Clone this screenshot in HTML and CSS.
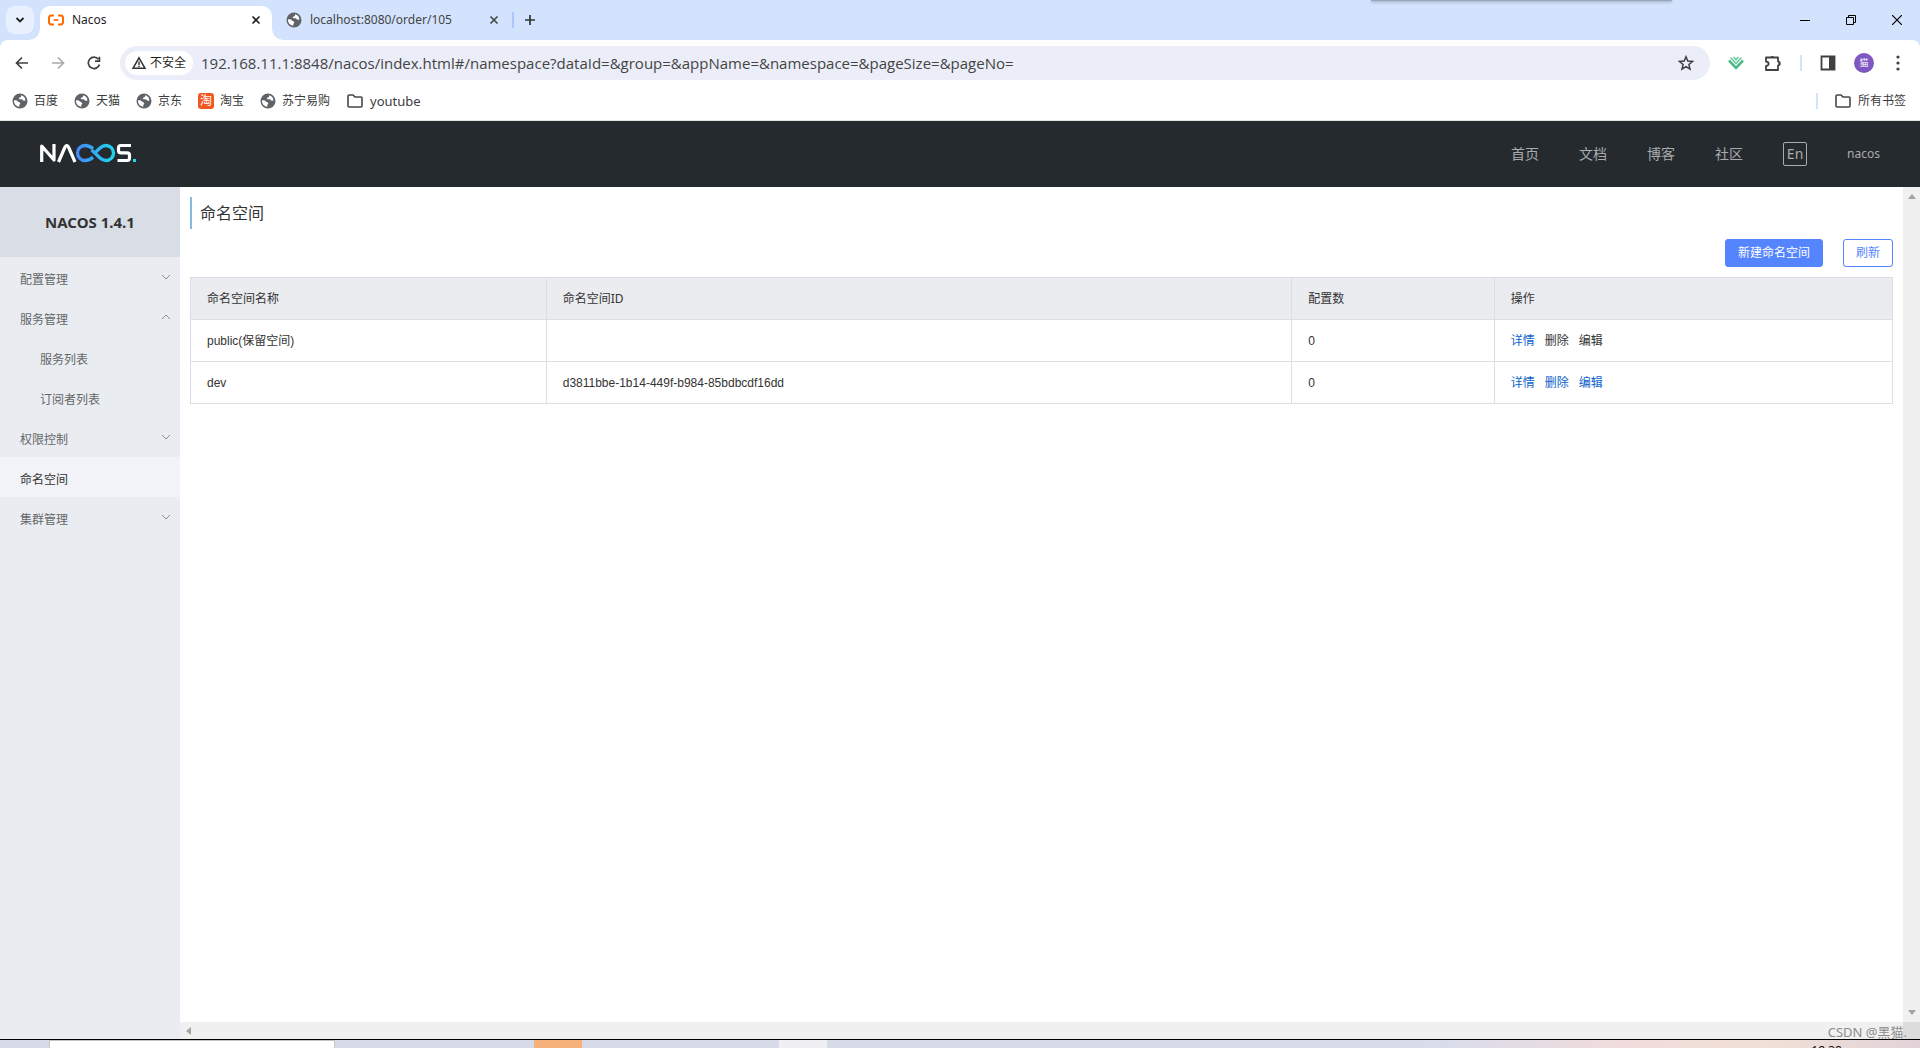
FILE: index.html
```html
<!DOCTYPE html>
<html lang="zh-CN">
<head>
<meta charset="utf-8">
<title>Nacos</title>
<link rel="stylesheet" href="styles.css">
</head>
<body>
<svg class="defs" aria-hidden="true">
  <symbol id="globe" viewBox="0 0 16 16"><circle cx="8" cy="8" r="7.5" fill="#5f6368"/><path d="M2 7.6C3.4 7 5 7.400 6 8.500S8.200 9.300 8.300 10.300 7.300 11.300 7.300 12.300V13.700C4 13.600 1.800 10.800 2 7.600ZM9.200 2.200C8.800 3.300 9.400 3.700 8.200 4.300S6.300 5.200 7.200 6 9.600 5.900 10.300 6.800 11.800 8.100 13.400 7.600C13.500 4.800 11.600 2.700 9.200 2.200Z" fill="#fff"/></symbol>
  <symbol id="close" viewBox="0 0 10 10"><path d="M1.500 1.500 8.500 8.500M8.500 1.500 1.500 8.500" fill="none" stroke="currentColor" stroke-width="1.600"/></symbol>
  <symbol id="folder" viewBox="0 0 18 16"><path d="M2 3.200C2 2.600 2.400 2 3.200 2H7L9 4H15C15.700 4 16 4.500 16 5.200V12.800C16 13.500 15.600 14 15 14H3.200C2.400 14 2 13.500 2 12.800Z" fill="none" stroke="#474747" stroke-width="1.600"/></symbol>
  <symbol id="chevron" viewBox="0 0 10 8"><path d="M1 2 5 6 9 2" fill="none" stroke="#8a8d92" stroke-width="1"/></symbol>
</svg>

<div class="browser">
  <div class="tabstrip">
    <button class="tab-search" aria-label="搜索标签页"><svg width="10" height="8" viewBox="0 0 10 8"><path d="M1.500 2 5 5.500 8.500 2" fill="none" stroke="#1f1f1f" stroke-width="1.800"/></svg></button>
    <div class="tab active">
      <svg width="16" height="16" viewBox="0 0 16 16"><path d="M6 3.600H3.500Q1 3.600 1 6V10Q1 12.400 3.500 12.400H6M10 3.600H12.500Q15 3.600 15 6V10Q15 12.400 12.500 12.400H10" fill="none" stroke="#ff6a00" stroke-width="2"/><path d="M5.500 8H10.500" stroke="#ff6a00" stroke-width="1.600"/></svg>
      <span class="tab-title">Nacos</span>
      <button class="tab-close" aria-label="关闭"><svg width="10" height="10"><use href="#close"/></svg></button>
    </div>
    <div class="tab">
      <svg width="16" height="16"><use href="#globe"/></svg>
      <span class="tab-title">localhost:8080/order/105</span>
      <button class="tab-close" aria-label="关闭"><svg width="10" height="10"><use href="#close"/></svg></button>
    </div>
    <button class="new-tab" aria-label="新标签页"><svg width="12" height="12" viewBox="0 0 12 12"><path d="M6 1V11M1 6H11" stroke="#333" stroke-width="1.700"/></svg></button>
    <div class="window-buttons">
      <button aria-label="最小化"><svg width="10" height="10" viewBox="0 0 10 10"><path d="M0 5.500H10" stroke="#000"/></svg></button>
      <button aria-label="还原"><svg width="10" height="10" viewBox="0 0 10 10"><path d="M.5 2.500H7.500V9.500H.5ZM2.500 2.500V.5H9.500V7.500H7.500" fill="none" stroke="#000"/></svg></button>
      <button aria-label="关闭窗口"><svg width="10" height="10" viewBox="0 0 10 10"><path d="M0 0 10 10M10 0 0 10" stroke="#000" stroke-width="1.200"/></svg></button>
    </div>
    <div class="overlay-edge"></div>
  </div>

  <div class="toolbar">
    <button aria-label="后退"><svg width="14" height="14" viewBox="0 0 14 14"><path d="M13 7H2M7 1.500 1.500 7 7 12.500" fill="none" stroke="#404040" stroke-width="1.700"/></svg></button>
    <button aria-label="前进"><svg width="14" height="14" viewBox="0 0 14 14"><path d="M1 7H12M7 1.500 12.500 7 7 12.500" fill="none" stroke="#aaa" stroke-width="1.700"/></svg></button>
    <button aria-label="重新加载"><svg width="14" height="14" viewBox="0 0 14 14"><path d="M12.500 8.500A5.700 5.700 0 1 1 11.500 3.300" fill="none" stroke="#404040" stroke-width="1.700"/><path d="M13.300.8V6H8V4.300H11.600V.8Z" fill="#404040"/></svg></button>
    <div class="omnibox">
      <button class="chip"><svg width="14" height="14" viewBox="0 0 14 14"><path d="M7 1.800 13 12.300H1Z" fill="none" stroke="#333" stroke-width="1.500"/><path d="M7 5.500V9M7 9.800V11.200" stroke="#333" stroke-width="1.400"/></svg>不安全</button>
      <input class="url" type="text" aria-label="地址" value="192.168.11.1:8848/nacos/index.html#/namespace?dataId=&amp;group=&amp;appName=&amp;namespace=&amp;pageSize=&amp;pageNo=">
      <button class="star" aria-label="收藏"><svg width="16" height="16" viewBox="0 0 16 16"><path d="M8 1.800 9.800 6.100 14.500 6.500 10.900 9.500 12 14.200 8 11.700 4 14.200 5.100 9.500 1.500 6.500 6.200 6.100Z" fill="none" stroke="#404040" stroke-width="1.500"/></svg></button>
    </div>
    <div class="tools">
      <button aria-label="扩展"><svg width="16" height="14" viewBox="0 0 16 14"><path d="M1 4.500 8 11.800 15 4.500" fill="none" stroke="#4dbb8b" stroke-width="2.600"/><path d="M2.500 1.500 8 7.300 13.500 1.500M5.500 1 8 3.600 10.500 1" fill="none" stroke="#65c99b" stroke-width="1.500"/></svg></button>
      <button aria-label="扩展程序"><svg width="20" height="18" viewBox="0 0 20 18"><path d="M4 3.500H16V7.500L17.500 8V11L16 11.500V16H4V12C7.500 11.500 7.500 8 4 7.500Z" fill="none" stroke="#404040" stroke-width="1.800" stroke-linejoin="round"/><path d="M8.500 3A2 2 0 0 1 12 3ZM16.500 7.500A2 2 0 0 1 16.500 11.500Z" fill="#404040"/></svg></button>
      <span class="divider"></span>
      <button aria-label="侧边栏"><svg width="16" height="16" viewBox="0 0 16 16"><path d="M1.500 1.500H14.500V14.500H1.500Z" fill="none" stroke="#404040" stroke-width="1.800"/><path d="M9 1.500H14.500V14.500H9Z" fill="#404040"/></svg></button>
      <button class="avatar">猫</button>
      <button class="menu" aria-label="菜单"><svg width="4" height="16" viewBox="0 0 4 16"><circle cx="2" cy="2" r="1.600" fill="#404040"/><circle cx="2" cy="8" r="1.600" fill="#404040"/><circle cx="2" cy="14" r="1.600" fill="#404040"/></svg></button>
    </div>
  </div>

  <nav class="bookmarks" aria-label="书签">
    <a href="#"><svg width="16" height="16"><use href="#globe"/></svg>百度</a>
    <a href="#"><svg width="16" height="16"><use href="#globe"/></svg>天猫</a>
    <a href="#"><svg width="16" height="16"><use href="#globe"/></svg>京东</a>
    <a href="#"><span class="taobao">淘</span>淘宝</a>
    <a href="#"><svg width="16" height="16"><use href="#globe"/></svg>苏宁易购</a>
    <a href="#"><svg width="18" height="16"><use href="#folder"/></svg><span class="latin">youtube</span></a>
    <span class="divider"></span>
    <a href="#"><svg width="18" height="16"><use href="#folder"/></svg>所有书签</a>
  </nav>
</div>

<header class="site-header">
  <a class="logo" href="#" aria-label="Nacos">
    <svg width="98" height="20" viewBox="0 0 98 20">
      <defs><linearGradient id="wave" gradientUnits="userSpaceOnUse" x1="36" y1="0" x2="76" y2="0"><stop offset="0" stop-color="#4585f5"/><stop offset="1" stop-color="#1edaf0"/></linearGradient></defs>
      <path d="M1.700 19V3L14 17V1M18.500 19 25 4Q26.800 1 28.500 4L35 19" fill="none" stroke="#fff" stroke-width="3.200" stroke-linejoin="round"/>
      <path d="M53 5.800C50.500 3.500 48.500 2.500 45 2.500A7.500 7.500 0 0 0 45 17.500C48.500 17.500 50.500 16.500 53 14.200M54.800 10 60 5Q62.800 2.500 66 2.500A7.500 7.500 0 0 1 66 17.500Q62.800 17.500 60 15ZM51.500 7.200 54 9" fill="none" stroke="url(#wave)" stroke-width="3.300"/>
      <path d="M91 2.500H81Q78.500 2.500 78.500 5V7.500Q78.500 9.800 81 9.800H87Q89.500 9.800 89.500 12.300V15Q89.500 17.500 87 17.500H77.500" fill="none" stroke="#fff" stroke-width="3.200"/>
      <rect x="93" y="16" width="3" height="3" fill="#1edaf0"/>
    </svg>
  </a>
  <nav class="site-nav">
    <a href="#">首页</a><a href="#">文档</a><a href="#">博客</a><a href="#">社区</a>
    <button class="lang">En</button>
    <a class="user" href="#">nacos</a>
  </nav>
</header>

<div class="workspace">
  <aside class="sidebar">
    <h1>NACOS 1.4.1</h1>
    <ul>
      <li><a href="#">配置管理<svg width="10" height="8"><use href="#chevron"/></svg></a></li>
      <li><a href="#">服务管理<svg class="up" width="10" height="8"><use href="#chevron"/></svg></a>
        <ul class="sub">
          <li><a href="#">服务列表</a></li>
          <li><a href="#">订阅者列表</a></li>
        </ul>
      </li>
      <li><a href="#">权限控制<svg width="10" height="8"><use href="#chevron"/></svg></a></li>
      <li><a class="current" href="#">命名空间</a></li>
      <li><a href="#">集群管理<svg width="10" height="8"><use href="#chevron"/></svg></a></li>
    </ul>
  </aside>
  <div class="pane">
    <main>
      <h2>命名空间</h2>
      <div class="actions">
        <button class="primary">新建命名空间</button>
        <button class="outline">刷新</button>
      </div>
      <table>
        <colgroup><col class="c-name"><col class="c-id"><col class="c-count"><col></colgroup>
        <thead><tr><th>命名空间名称</th><th>命名空间ID</th><th>配置数</th><th>操作</th></tr></thead>
        <tbody>
          <tr><td>public(保留空间)</td><td></td><td>0</td><td><div class="ops"><a href="#">详情</a><span>删除</span><span>编辑</span></div></td></tr>
          <tr><td>dev</td><td>d3811bbe-1b14-449f-b984-85bdbcdf16dd</td><td>0</td><td><div class="ops"><a href="#">详情</a><a href="#">删除</a><a href="#">编辑</a></div></td></tr>
        </tbody>
      </table>
    </main>
    <div class="vscroll"><svg width="8" height="5" viewBox="0 0 8 5"><path d="M0 5 4 0 8 5Z" fill="#a3a3a3"/></svg><svg width="8" height="5" viewBox="0 0 8 5"><path d="M0 0 4 5 8 0Z" fill="#a3a3a3"/></svg></div>
    <div class="hscroll"><svg width="5" height="8" viewBox="0 0 5 8"><path d="M5 0 0 4 5 8Z" fill="#a3a3a3"/></svg></div>
    <div class="corner"></div>
    <span class="watermark">CSDN @黑猫.</span>
  </div>
</div>

<footer class="taskbar">
  <span class="search"></span><span class="app orange"></span><span class="app light"></span>
  <time>18:38</time>
</footer>
</body>
</html>
```
FILE: styles.css
```css
* { box-sizing: border-box; }

body {
  margin: 0;
  height: 100vh;
  display: flex;
  flex-direction: column;
  overflow: hidden;
  background: #fff;
  color: #333;
  font: 12px/18px "Noto Sans", "Noto Sans CJK SC", sans-serif;
}

button { border: 0; padding: 0; background: none; color: inherit; font: inherit; display: flex; align-items: center; justify-content: center; }
a { color: inherit; text-decoration: none; }
svg { display: block; flex: none; }
ul { list-style: none; margin: 0; padding: 0; }
.defs { position: absolute; width: 0; height: 0; }

/* Browser chrome */
.browser { flex: none; background: #d3e3fd; border-bottom: 1px solid #e4e2dc; }
.tabstrip { position: relative; height: 40px; padding: 6px 0 0 6px; display: flex; align-items: flex-start; }
.tab-search { width: 28px; height: 28px; border-radius: 9px; background: #e9f1fe; margin-right: 6px; }
.tab { width: 232px; height: 28px; padding: 0 6px 0 14px; display: flex; align-items: center; gap: 8px; color: #444; }
.tab.active { position: relative; height: 34px; padding: 0 11px 6px 8px; border-radius: 10px 10px 0 0; background: #fff; color: #1f1f1f; }
.tab.active::before, .tab.active::after { content: ""; position: absolute; bottom: 0; width: 10px; height: 10px; }
.tab.active::before { right: 100%; background: radial-gradient(circle at 0 0, transparent 9px, #fff 10px); }
.tab.active::after { left: 100%; background: radial-gradient(circle at 100% 0, transparent 9px, #fff 10px); }
.tab-title { flex: 1; white-space: nowrap; line-height: 20px; }
.new-tab { width: 34px; height: 28px; position: relative; }
.new-tab::before { content: ""; position: absolute; left: 7px; top: 6px; width: 2px; height: 16px; background: #a8c7fa; }
.new-tab svg { margin-left: 16px; }
.tab + .tab { width: 233px; }
.window-buttons { margin-left: auto; display: flex; }
.window-buttons button { width: 46px; height: 28px; }
.overlay-edge { position: absolute; right: 248px; top: 0; width: 301px; height: 1px; background: #98a5ba; box-shadow: 0 1px 3px #6d7a90; }

.toolbar { height: 46px; padding: 0 20px 0 0; border-radius: 8px 8px 0 0; background: #fff; display: flex; align-items: center; }
.toolbar > button { width: 36px; }
.toolbar > button:first-child { margin-left: 4px; }
.omnibox { flex: 1; height: 34px; margin-left: 8px; padding: 0 16px 0 5px; border-radius: 17px; background: #ebeef8; display: flex; align-items: center; gap: 8px; }
.chip { width: 68px; height: 24px; border-radius: 12px; background: #fff; gap: 4px; color: #1f1f1f; }
.url { flex: 1; min-width: 0; border: 0; padding: 0; outline: 0; background: none; color: #444; font: 15px/20px "Open Sans", sans-serif; }
.tools { width: 190px; padding-left: 18px; display: flex; align-items: center; gap: 18px; }
.menu { margin-left: auto; }
.divider { width: 2px; height: 16px; background: #d3e3fd; }
.avatar { width: 20px; height: 20px; border-radius: 50%; background: #7e57c2; color: #fff; font-size: 9px; line-height: 20px; }

.bookmarks { height: 34px; padding: 0 14px 4px 12px; background: #fff; display: flex; align-items: center; gap: 16px; color: #3c3c3c; }
.bookmarks a { display: flex; align-items: center; gap: 6px; }
.bookmarks .divider { margin-left: auto; }
.latin { font-size: 13px; }
.taobao { width: 16px; height: 16px; border-radius: 3px; background: #f4561f; color: #fff; font-size: 12px; line-height: 16px; text-align: center; }

/* Console header */
.site-header { flex: none; height: 66px; padding: 0 40px; background: #252a2f; display: flex; align-items: center; justify-content: space-between; }
.logo { margin-bottom: 2px; }
.site-nav { display: flex; align-items: center; gap: 40px; color: #a9abad; font-size: 14px; }
.lang { width: 24px; height: 24px; border: 1px solid #a9abad; border-radius: 2px; }
.user { font-size: 12px; }

/* Sidebar */
.workspace { flex: 1; min-height: 0; display: flex; }
.sidebar { flex: none; width: 180px; background: #e9edf2; color: #666; }
.sidebar h1 { margin: 0; height: 70px; background: #d8dde6; color: #333; font-size: 15px; line-height: 70px; text-align: center; }
.sidebar a { height: 40px; padding: 6px 9px 0 20px; display: flex; align-items: center; justify-content: space-between; }
.sidebar .sub a { padding-left: 40px; }
.sidebar svg { margin-bottom: 6px; }
.sidebar .up { transform: rotate(180deg); }
.sidebar .current { background: #f2f3f8; color: #333; }

/* Content pane with its scrollbars */
.pane { position: relative; flex: 1; display: grid; grid-template: 1fr 17px / 1fr 17px; }
main { padding: 10px; }
h2 { margin: 0 0 10px; padding-left: 8px; border-left: 2px solid #86b8e2; font-size: 16px; font-weight: 400; line-height: 32px; }
.actions { display: flex; justify-content: flex-end; gap: 20px; margin-bottom: 10px; }
.actions button { height: 28px; padding: 0 12px; border: 1px solid #5584ff; border-radius: 3px; }
.primary { background: #5584ff; color: #fff; }
.outline { color: #5584ff; }
table { width: 100%; table-layout: fixed; border-collapse: collapse; }
th, td { height: 42px; padding: 0 16px; border: 1px solid #dcdee3; text-align: left; font-weight: 400; }
th { background: #ebecf0; }
td { font-family: "Liberation Sans", "Noto Sans CJK SC", sans-serif; }
.c-name { width: 20.9%; }
.c-id { width: 43.8%; }
.c-count { width: 11.9%; }
.ops { display: flex; gap: 10px; }
.ops a { color: #0b62cc; }
.vscroll { background: #f0f0f0; padding: 7px 0; display: flex; flex-direction: column; align-items: center; justify-content: space-between; }
.hscroll { background: #f0f0f0; padding-left: 6px; display: flex; align-items: center; }
.corner { background: #dcdcdc; }
.watermark { position: absolute; right: 13px; bottom: -2px; color: #8c8c8c; font-size: 13px; }

/* Desktop taskbar, cut off by the lower edge */
.taskbar { flex: none; height: 9px; overflow: hidden; border-top: 1px solid #000; background: linear-gradient(90deg, #d6dbe7 0 50%, #d8dceb 75%, #f0dcdc 84%, #f1e0d6 92%, #e2d3d8); display: flex; padding-left: 49px; }
.search { width: 286px; border: 1px solid #c4c4c4; border-bottom: 0; background: #fff; }
.app { width: 48px; }
.orange { margin-left: 199px; background: #f6b17b; }
.light { margin-left: 197px; background: #f0f0f4; }
time { margin: 4px 78px 0 auto; color: #111; line-height: 14px; }
```
